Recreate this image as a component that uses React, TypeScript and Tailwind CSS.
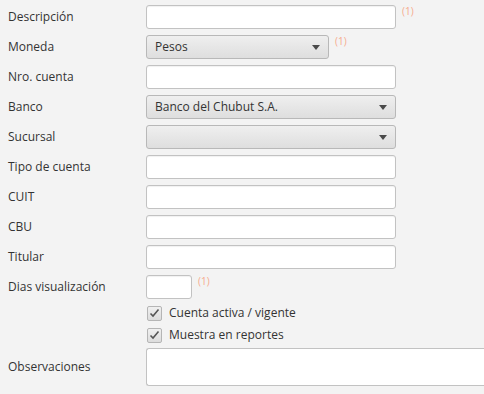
const font = { fontFamily: '"Open Sans", "Noto Sans", sans-serif' };

function Req() {
  return <span className="ml-[6px] -mt-[12px] text-[10px] text-[#f6ab8e]">(1)</span>;
}

function TextField({ w = "w-[250px]" }: { w?: string }) {
  return (
    <div
      className={`${w} h-[24px] rounded-[3px] border border-[#c2c2c2] bg-white shadow-[inset_0_1px_1px_rgba(0,0,0,0.06)]`}
    />
  );
}

function Combo({ value, w = "w-[250px]" }: { value?: string; w?: string }) {
  return (
    <div
      className={`${w} flex h-[24px] items-center justify-between rounded-[3px] border border-[#b8b8b8] bg-gradient-to-b from-[#efefef] to-[#dedede] pl-[8px] pr-[8px] text-[#333]`}
    >
      <span>{value}</span>
      <svg width="8" height="5" viewBox="0 0 8 5">
        <path d="M0 0 H8 L4 5 Z" fill="#4a4a4a" />
      </svg>
    </div>
  );
}

function Check({ label }: { label: string }) {
  return (
    <div className="flex h-[18px] items-center gap-[7px]">
      <div className="flex h-[15px] w-[15px] items-center justify-center rounded-[2px] border border-[#b5b5b5] bg-gradient-to-b from-[#f0f0f0] to-[#dcdcdc]">
        <svg width="11" height="10" viewBox="0 0 11 10">
          <path d="M1.5 5.5 L4 8 L9.5 1.5" fill="none" stroke="#555" strokeWidth="1.6" />
        </svg>
      </div>
      <span className="text-[#333]">{label}</span>
    </div>
  );
}

function Row({ label, children }: { label: string; children: React.ReactNode }) {
  return (
    <div className="flex h-[24px] items-center">
      <div className="w-[146px] pl-[8px] text-[#333]">{label}</div>
      <div className="flex items-center">{children}</div>
    </div>
  );
}

export default function App() {
  return (
    <div style={font} className="h-[394px] w-[484px] overflow-hidden bg-[#f3f3f3] pt-[5px] text-[12px]">
      <div className="flex flex-col gap-[6px]">
        <Row label="Descripción">
          <TextField />
          <Req />
        </Row>
        <Row label="Moneda">
          <Combo value="Pesos" w="w-[183px]" />
          <Req />
        </Row>
        <Row label="Nro. cuenta">
          <TextField />
        </Row>
        <Row label="Banco">
          <Combo value="Banco del Chubut S.A." />
        </Row>
        <Row label="Sucursal">
          <Combo />
        </Row>
        <Row label="Tipo de cuenta">
          <TextField />
        </Row>
        <Row label="CUIT">
          <TextField />
        </Row>
        <Row label="CBU">
          <TextField />
        </Row>
        <Row label="Titular">
          <TextField />
        </Row>
        <Row label="Dias visualización">
          <TextField w="w-[46px]" />
          <Req />
        </Row>
      </div>
      <div className="mt-[5px] flex flex-col gap-[4px] pl-[147px]">
        <Check label="Cuenta activa / vigente" />
        <Check label="Muestra en reportes" />
      </div>
      <div className="mt-[4px] flex items-center">
        <div className="w-[146px] pl-[8px] text-[#333]">Observaciones</div>
        <div className="h-[38px] flex-1 rounded-l-[3px] border border-r-0 border-[#c2c2c2] bg-white" />
      </div>
    </div>
  );
}
